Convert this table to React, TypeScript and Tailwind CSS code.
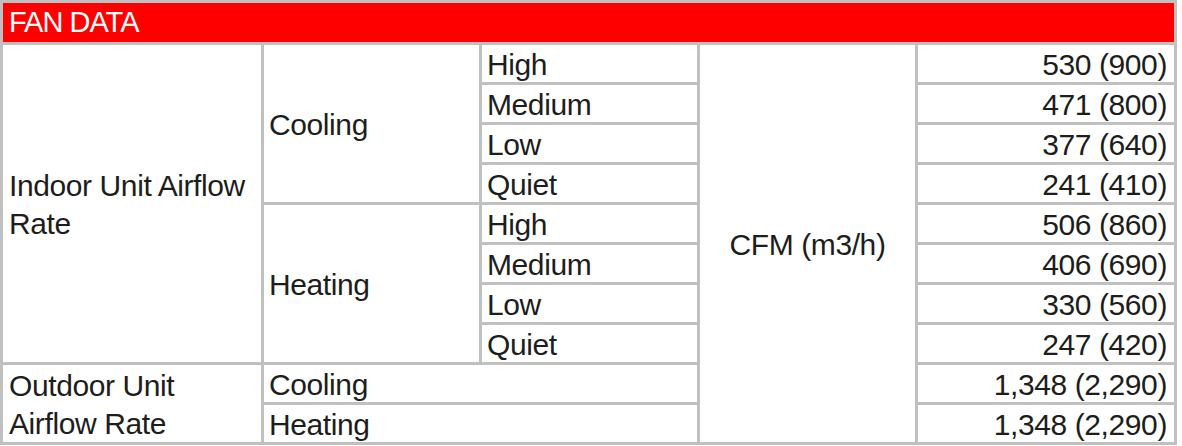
const indoorRows = [
  { mode: 'High', value: '530 (900)' },
  { mode: 'Medium', value: '471 (800)' },
  { mode: 'Low', value: '377 (640)' },
  { mode: 'Quiet', value: '241 (410)' },
  { mode: 'High', value: '506 (860)' },
  { mode: 'Medium', value: '406 (690)' },
  { mode: 'Low', value: '330 (560)' },
  { mode: 'Quiet', value: '247 (420)' },
];

// explicit row starts so Tailwind sees every class
const rowStart = [
  'row-start-2',
  'row-start-3',
  'row-start-4',
  'row-start-5',
  'row-start-6',
  'row-start-7',
  'row-start-8',
  'row-start-9',
  'row-start-10',
  'row-start-11',
];

const cell = 'flex items-center bg-white pt-[2px] leading-[38px]';

export default function App() {
  return (
    <div className="h-[446px] w-[1182px] bg-white font-['Liberation_Sans',Arial,sans-serif] text-[30px] tracking-[-0.4px] text-[#1d1d1b]">
      <div className="grid w-[1177px] grid-cols-[258px_215px_215px_215px_256px] grid-rows-[39px_repeat(10,37px)] gap-[3px] bg-[#c0c0c0] p-[3px]">
        <div className="col-span-5 flex items-center bg-[#ff0000] pt-[1px] pl-[6px] text-[29px] tracking-[-1px] text-white">
          FAN DATA
        </div>

        <div className={`${cell} col-start-1 row-span-8 row-start-2 pl-[6px]`}>
          Indoor Unit Airflow Rate
        </div>
        <div className={`${cell} col-start-2 row-span-4 row-start-2 pl-[5px]`}>Cooling</div>
        <div className={`${cell} col-start-2 row-span-4 row-start-6 pl-[5px]`}>Heating</div>

        {indoorRows.map((r, i) => (
          <div key={`m${i}`} className={`${cell} col-start-3 pl-[5px] ${rowStart[i]}`}>
            {r.mode}
          </div>
        ))}

        <div className={`${cell} col-start-4 row-span-10 row-start-2 justify-center`}>CFM (m3/h)</div>

        {indoorRows.map((r, i) => (
          <div key={`v${i}`} className={`${cell} col-start-5 justify-end pr-[7px] ${rowStart[i]}`}>
            {r.value}
          </div>
        ))}

        <div className={`${cell} col-start-1 row-span-2 row-start-10 pl-[6px]`}>Outdoor Unit Airflow Rate</div>
        <div className={`${cell} col-span-2 col-start-2 row-start-10 pl-[5px]`}>Cooling</div>
        <div className={`${cell} col-span-2 col-start-2 row-start-11 pl-[5px]`}>Heating</div>
        <div className={`${cell} col-start-5 row-start-10 justify-end pr-[7px]`}>1,348 (2,290)</div>
        <div className={`${cell} col-start-5 row-start-11 justify-end pr-[7px]`}>1,348 (2,290)</div>
      </div>
    </div>
  );
}
